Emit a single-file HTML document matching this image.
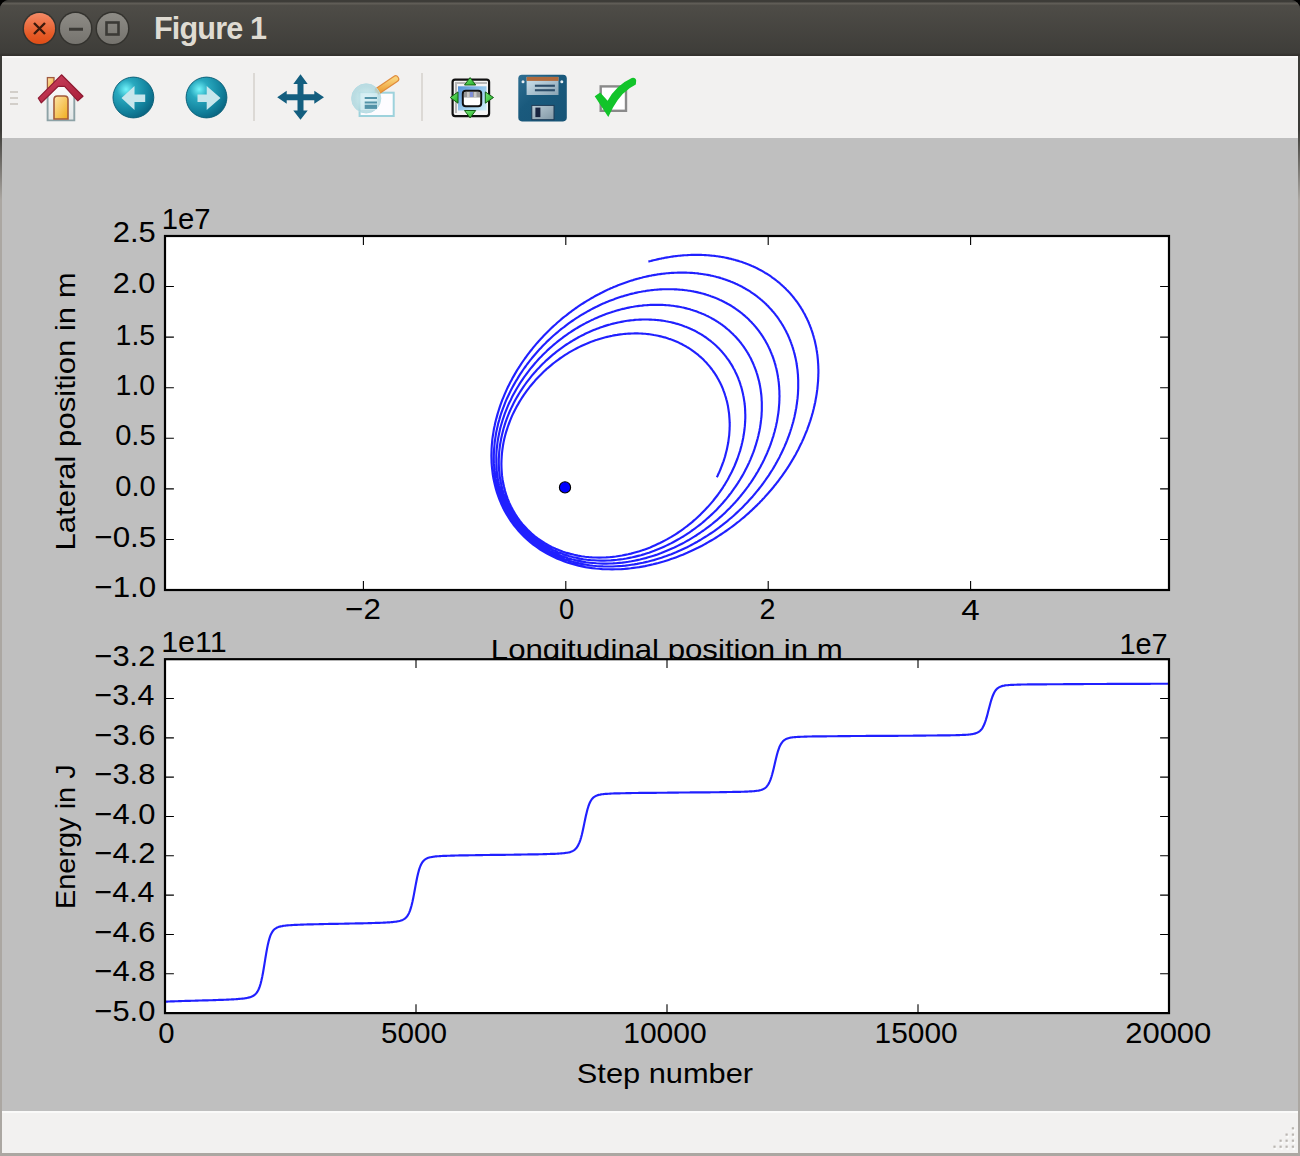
<!DOCTYPE html>
<html><head><meta charset="utf-8"><title>Figure 1</title>
<style>
html,body{margin:0;padding:0;width:1300px;height:1156px;overflow:hidden;background:#000;}
body{position:relative;font-family:"Liberation Sans",sans-serif;}
.win{position:absolute;left:0;top:0;width:1300px;height:1156px;border-radius:9px 9px 0 0;overflow:hidden;
 background:linear-gradient(to bottom,#3c3b37 0px,#3c3b37 130px,#aba7a2 200px,#aba7a2 100%);}
.title{position:absolute;left:0;top:0;width:1300px;height:56px;background:linear-gradient(to bottom,#3d3c38 0px,#3d3c38 2px,#625f59 3px,#5d5a54 4px,#4e4c47 5.5px,#3e3d39 53px,#34322e 55px,#34322e 56px);}
.title .hl{display:none;}
.btn{position:absolute;top:13px;width:31px;height:31px;border-radius:50%;box-shadow:0 0 0 1.5px #33322e;}
.close{left:24px;background:linear-gradient(to bottom,#f58a66,#e55a26 70%,#e04d16);}
.min{left:60px;background:linear-gradient(to bottom,#8e8c86,#75736e);}
.max{left:97px;background:linear-gradient(to bottom,#8e8c86,#75736e);}
.ttl{position:absolute;left:154px;top:11px;font-weight:bold;font-size:30.6px;color:#dfdbd2;letter-spacing:-0.85px;white-space:nowrap;}
.toolbar{position:absolute;left:2px;top:56px;width:1296px;height:82px;background:#f2f1f0;box-shadow:inset 0 2px 0 #f9f8f7;}
.plot{position:absolute;left:2px;top:138px;}
.status{position:absolute;left:2px;top:1111px;width:1296px;height:42px;background:#f2f1f0;box-shadow:inset 0 2px 0 #fafaf9;}
.icons{position:absolute;left:0;top:0;}
</style></head><body>
<div class="win">
 <div class="title"><div class="hl"></div>
  <div class="btn close"><svg width="31" height="31"><path d="M10 10L21 21M21 10L10 21" stroke="#3b1a0c" stroke-width="2.4"/></svg></div>
  <div class="btn min"><svg width="31" height="31"><path d="M9 16.2H23" stroke="#3b3a36" stroke-width="3"/></svg></div>
  <div class="btn max"><svg width="31" height="31"><rect x="9.5" y="9.5" width="12" height="12" fill="none" stroke="#3b3a36" stroke-width="2.6"/></svg></div>
  <div class="ttl">Figure 1</div>
 </div>
 <div class="toolbar"></div>
 <svg class="plot" width="1296" height="974" viewBox="2 138 1296 974">
<rect x="2" y="138" width="1296" height="974" fill="#bfbfbf"/>
<g font-family="Liberation Sans, sans-serif" font-size="29" fill="#000">
<text x="490.80" y="658.80" textLength="351.94" lengthAdjust="spacingAndGlyphs" font-size="28.00">Longitudinal position in m</text>
</g>
<rect x="165.0" y="236.0" width="1004.0" height="354.0" fill="#fff"/>
<clipPath id="c1"><rect x="165.0" y="236.0" width="1004.0" height="354.0"/></clipPath>
<path d="M716.8 477.3L717.6 475.7L718.3 474.1L719.1 472.5L719.8 470.9L720.5 469.3L721.1 467.7L721.7 466.1L722.3 464.5L722.9 462.9L723.5 461.3L724.0 459.8L724.5 458.2L725.0 456.6L725.4 455.1L725.8 453.5L726.2 452.0L726.6 450.4L727.0 448.9L727.3 447.3L727.6 445.8L727.9 444.3L728.2 442.8L728.4 441.3L728.6 439.7L728.8 438.2L729.0 436.7L729.2 435.3L729.3 433.8L729.4 432.3L729.5 430.8L729.6 429.4L729.6 427.9L729.7 426.5L729.7 425.0L729.7 423.6L729.6 422.2L729.6 420.8L729.5 419.4L729.4 418.0L729.3 416.6L729.2 415.2L729.1 413.8L728.9 412.4L728.7 411.1L728.5 409.7L728.3 408.4L728.1 407.1L727.9 405.7L727.6 404.4L727.3 403.1L727.0 401.8L726.7 400.5L726.3 399.3L726.0 398.0L725.6 396.7L725.2 395.5L724.8 394.2L724.4 393.0L724.0 391.8L723.5 390.6L723.1 389.4L722.6 388.2L722.1 387.0L721.6 385.8L721.0 384.6L720.5 383.5L719.9 382.3L719.3 381.2L718.7 380.1L718.1 379.0L717.5 377.9L716.9 376.8L716.2 375.7L715.5 374.7L714.9 373.6L714.2 372.6L713.4 371.5L712.7 370.5L712.0 369.5L711.2 368.5L710.4 367.5L709.7 366.5L708.9 365.6L708.0 364.6L707.2 363.7L706.4 362.7L705.5 361.8L704.6 360.9L703.8 360.0L702.9 359.1L702.0 358.3L701.0 357.4L700.1 356.6L699.1 355.8L698.2 354.9L697.2 354.1L696.2 353.4L695.2 352.6L694.2 351.8L693.2 351.1L692.1 350.3L691.1 349.6L690.0 348.9L688.9 348.2L687.8 347.5L686.7 346.9L685.6 346.2L684.5 345.6L683.3 345.0L682.2 344.3L681.0 343.7L679.9 343.2L678.7 342.6L677.5 342.1L676.2 341.5L675.0 341.0L673.8 340.5L672.5 340.0L671.3 339.6L670.0 339.1L668.7 338.7L667.4 338.2L666.1 337.8L664.8 337.4L663.5 337.1L662.1 336.7L660.8 336.4L659.4 336.1L658.1 335.8L656.7 335.5L655.3 335.2L653.9 335.0L652.5 334.7L651.0 334.5L649.6 334.3L648.1 334.1L646.7 334.0L645.2 333.8L643.7 333.7L642.3 333.6L640.8 333.5L639.3 333.5L637.7 333.4L636.2 333.4L634.7 333.4L633.1 333.5L631.6 333.5L630.0 333.6L628.4 333.6L626.9 333.8L625.3 333.9L623.7 334.0L622.1 334.2L620.4 334.4L618.8 334.6L617.2 334.9L615.5 335.1L613.9 335.4L612.2 335.8L610.6 336.1L608.9 336.5L607.2 336.9L605.5 337.3L603.8 337.7L602.1 338.2L600.4 338.7L598.7 339.2L597.0 339.8L595.3 340.3L593.5 340.9L591.8 341.6L590.0 342.2L588.3 342.9L586.5 343.7L584.8 344.4L583.0 345.2L581.3 346.0L579.5 346.9L577.7 347.8L575.9 348.7L574.2 349.6L572.4 350.6L570.6 351.6L568.8 352.7L567.0 353.8L565.2 354.9L563.4 356.1L561.6 357.3L559.9 358.5L558.1 359.8L556.3 361.1L554.5 362.5L552.7 363.9L551.0 365.3L549.2 366.8L547.4 368.3L545.7 369.9L543.9 371.5L542.2 373.2L540.5 374.9L538.7 376.7L537.0 378.5L535.3 380.3L533.7 382.3L532.0 384.2L530.3 386.2L528.7 388.3L527.1 390.4L525.5 392.6L523.9 394.8L522.4 397.1L520.9 399.5L519.4 401.9L518.0 404.4L516.5 406.9L515.2 409.5L513.8 412.2L512.5 414.9L511.3 417.7L510.1 420.6L509.0 423.5L507.9 426.5L506.9 429.6L505.9 432.7L505.0 436.0L504.2 439.2L503.5 442.6L502.9 446.0L502.4 449.5L502.0 453.0L501.7 456.6L501.5 460.3L501.4 464.0L501.5 467.7L501.7 471.5L502.0 475.4L502.5 479.2L503.2 483.1L504.1 487.1L505.1 491.0L506.3 494.9L507.7 498.8L509.2 502.6L511.0 506.4L512.9 510.1L515.1 513.8L517.4 517.3L519.9 520.8L522.5 524.1L525.4 527.3L528.3 530.4L531.4 533.3L534.6 536.0L538.0 538.6L541.4 540.9L544.9 543.2L548.4 545.2L552.1 547.1L555.7 548.8L559.4 550.3L563.1 551.7L566.8 552.9L570.5 553.9L574.2 554.8L577.9 555.6L581.5 556.2L585.1 556.7L588.7 557.1L592.2 557.4L595.7 557.5L599.2 557.6L602.6 557.5L606.0 557.4L609.3 557.2L612.5 556.9L615.8 556.5L618.9 556.0L622.0 555.5L625.1 554.9L628.1 554.3L631.0 553.6L633.9 552.8L636.7 552.0L639.5 551.2L642.3 550.3L644.9 549.4L647.6 548.4L650.2 547.4L652.7 546.3L655.2 545.2L657.6 544.1L660.0 543.0L662.4 541.8L664.6 540.6L666.9 539.4L669.1 538.1L671.3 536.9L673.4 535.6L675.5 534.3L677.5 533.0L679.5 531.6L681.4 530.3L683.4 528.9L685.2 527.5L687.1 526.1L688.9 524.7L690.6 523.3L692.4 521.9L694.0 520.4L695.7 519.0L697.3 517.5L698.9 516.0L700.4 514.6L701.9 513.1L703.4 511.6L704.9 510.1L706.3 508.6L707.7 507.1L709.0 505.6L710.3 504.1L711.6 502.6L712.9 501.1L714.1 499.5L715.3 498.0L716.5 496.5L717.7 495.0L718.8 493.4L719.9 491.9L720.9 490.4L722.0 488.8L723.0 487.3L723.9 485.8L724.9 484.3L725.8 482.7L726.7 481.2L727.6 479.7L728.5 478.1L729.3 476.6L730.1 475.1L730.9 473.6L731.7 472.0L732.4 470.5L733.1 469.0L733.8 467.5L734.5 466.0L735.1 464.5L735.7 463.0L736.3 461.5L736.9 460.0L737.5 458.5L738.0 457.0L738.5 455.5L739.0 454.0L739.5 452.5L740.0 451.1L740.4 449.6L740.8 448.1L741.2 446.6L741.6 445.2L741.9 443.7L742.3 442.3L742.6 440.8L742.9 439.4L743.2 438.0L743.4 436.5L743.7 435.1L743.9 433.7L744.1 432.3L744.3 430.9L744.5 429.5L744.6 428.1L744.8 426.7L744.9 425.3L745.0 423.9L745.1 422.5L745.2 421.2L745.2 419.8L745.3 418.4L745.3 417.1L745.3 415.7L745.3 414.4L745.2 413.1L745.2 411.8L745.1 410.4L745.1 409.1L745.0 407.8L744.9 406.5L744.8 405.2L744.6 404.0L744.5 402.7L744.3 401.4L744.1 400.1L743.9 398.9L743.7 397.6L743.5 396.4L743.2 395.2L743.0 393.9L742.7 392.7L742.4 391.5L742.1 390.3L741.8 389.1L741.5 387.9L741.2 386.7L740.8 385.6L740.4 384.4L740.1 383.3L739.7 382.1L739.3 381.0L738.8 379.8L738.4 378.7L738.0 377.6L737.5 376.5L737.0 375.4L736.5 374.3L736.0 373.2L735.5 372.2L735.0 371.1L734.5 370.0L733.9 369.0L733.3 367.9L732.8 366.9L732.2 365.9L731.6 364.9L731.0 363.9L730.3 362.9L729.7 361.9L729.1 360.9L728.4 360.0L727.7 359.0L727.0 358.1L726.3 357.1L725.6 356.2L724.9 355.3L724.2 354.4L723.4 353.5L722.7 352.6L721.9 351.7L721.1 350.8L720.3 350.0L719.5 349.1L718.7 348.3L717.9 347.5L717.1 346.7L716.2 345.8L715.3 345.0L714.5 344.3L713.6 343.5L712.7 342.7L711.8 342.0L710.9 341.2L710.0 340.5L709.0 339.8L708.1 339.1L707.1 338.4L706.2 337.7L705.2 337.0L704.2 336.3L703.2 335.7L702.2 335.0L701.2 334.4L700.1 333.8L699.1 333.2L698.0 332.6L697.0 332.0L695.9 331.4L694.8 330.8L693.7 330.3L692.6 329.8L691.5 329.2L690.4 328.7L689.3 328.2L688.1 327.7L687.0 327.3L685.8 326.8L684.7 326.4L683.5 325.9L682.3 325.5L681.1 325.1L679.9 324.7L678.7 324.3L677.4 323.9L676.2 323.6L674.9 323.2L673.7 322.9L672.4 322.6L671.2 322.3L669.9 322.0L668.6 321.8L667.3 321.5L666.0 321.3L664.6 321.0L663.3 320.8L662.0 320.6L660.6 320.4L659.3 320.3L657.9 320.1L656.5 320.0L655.2 319.9L653.8 319.8L652.4 319.7L651.0 319.6L649.5 319.6L648.1 319.5L646.7 319.5L645.2 319.5L643.8 319.5L642.3 319.5L640.9 319.6L639.4 319.6L637.9 319.7L636.4 319.8L634.9 319.9L633.4 320.1L631.9 320.2L630.4 320.4L628.9 320.6L627.3 320.8L625.8 321.0L624.3 321.3L622.7 321.6L621.1 321.9L619.6 322.2L618.0 322.5L616.4 322.9L614.8 323.2L613.2 323.6L611.6 324.0L610.0 324.5L608.4 324.9L606.8 325.4L605.2 325.9L603.5 326.4L601.9 327.0L600.2 327.6L598.6 328.2L596.9 328.8L595.3 329.4L593.6 330.1L592.0 330.8L590.3 331.5L588.6 332.3L586.9 333.0L585.2 333.8L583.6 334.7L581.9 335.5L580.2 336.4L578.5 337.3L576.8 338.3L575.1 339.2L573.4 340.2L571.7 341.3L570.0 342.3L568.3 343.4L566.5 344.5L564.8 345.7L563.1 346.9L561.4 348.1L559.7 349.3L558.0 350.6L556.3 351.9L554.6 353.3L552.9 354.7L551.2 356.1L549.5 357.6L547.8 359.1L546.1 360.6L544.5 362.2L542.8 363.8L541.1 365.5L539.5 367.2L537.8 368.9L536.2 370.7L534.6 372.6L532.9 374.4L531.3 376.4L529.8 378.3L528.2 380.3L526.6 382.4L525.1 384.5L523.6 386.7L522.1 388.9L520.6 391.2L519.1 393.5L517.7 395.9L516.3 398.3L514.9 400.8L513.6 403.3L512.3 405.9L511.0 408.6L509.8 411.3L508.6 414.1L507.5 416.9L506.4 419.8L505.4 422.7L504.4 425.8L503.5 428.8L502.7 432.0L501.9 435.2L501.2 438.5L500.6 441.8L500.0 445.2L499.6 448.6L499.2 452.2L499.0 455.7L498.8 459.3L498.8 463.0L498.9 466.7L499.1 470.5L499.5 474.3L500.0 478.1L500.7 481.9L501.5 485.8L502.4 489.6L503.6 493.5L504.9 497.3L506.4 501.2L508.0 504.9L509.9 508.7L511.9 512.3L514.0 515.9L516.4 519.4L518.9 522.8L521.6 526.0L524.4 529.2L527.3 532.2L530.4 535.0L533.6 537.7L536.9 540.3L540.2 542.7L543.7 544.9L547.2 546.9L550.7 548.8L554.3 550.6L558.0 552.2L561.6 553.6L565.3 554.9L568.9 556.0L572.5 557.0L576.2 557.8L579.8 558.6L583.4 559.2L586.9 559.7L590.5 560.1L593.9 560.3L597.4 560.5L600.8 560.6L604.2 560.6L607.5 560.5L610.8 560.4L614.0 560.1L617.2 559.8L620.3 559.4L623.4 559.0L626.4 558.5L629.4 557.9L632.4 557.3L635.3 556.6L638.1 555.9L640.9 555.2L643.6 554.4L646.3 553.5L649.0 552.7L651.6 551.7L654.2 550.8L656.7 549.8L659.2 548.8L661.6 547.8L664.0 546.7L666.3 545.6L668.6 544.5L670.9 543.4L673.1 542.2L675.3 541.0L677.5 539.8L679.6 538.6L681.6 537.4L683.7 536.2L685.7 534.9L687.6 533.6L689.6 532.3L691.4 531.0L693.3 529.7L695.1 528.4L696.9 527.0L698.7 525.7L700.4 524.3L702.1 523.0L703.7 521.6L705.3 520.2L706.9 518.8L708.5 517.4L710.0 516.0L711.5 514.6L713.0 513.2L714.5 511.8L715.9 510.4L717.3 508.9L718.6 507.5L720.0 506.1L721.3 504.6L722.6 503.2L723.8 501.8L725.1 500.3L726.3 498.9L727.5 497.4L728.6 496.0L729.7 494.5L730.9 493.1L731.9 491.6L733.0 490.1L734.0 488.7L735.1 487.2L736.0 485.8L737.0 484.3L738.0 482.9L738.9 481.4L739.8 480.0L740.7 478.5L741.5 477.1L742.4 475.6L743.2 474.2L744.0 472.7L744.8 471.3L745.5 469.8L746.3 468.4L747.0 466.9L747.7 465.5L748.4 464.1L749.1 462.6L749.7 461.2L750.3 459.8L750.9 458.3L751.5 456.9L752.1 455.5L752.6 454.1L753.2 452.7L753.7 451.3L754.2 449.9L754.7 448.4L755.1 447.0L755.6 445.7L756.0 444.3L756.4 442.9L756.8 441.5L757.2 440.1L757.6 438.7L757.9 437.4L758.3 436.0L758.6 434.6L758.9 433.3L759.2 431.9L759.5 430.5L759.7 429.2L760.0 427.9L760.2 426.5L760.4 425.2L760.6 423.9L760.8 422.5L760.9 421.2L761.1 419.9L761.2 418.6L761.4 417.3L761.5 416.0L761.6 414.7L761.6 413.4L761.7 412.1L761.8 410.8L761.8 409.6L761.8 408.3L761.8 407.0L761.8 405.8L761.8 404.5L761.8 403.3L761.8 402.0L761.7 400.8L761.6 399.6L761.6 398.3L761.5 397.1L761.4 395.9L761.3 394.7L761.1 393.5L761.0 392.3L760.8 391.1L760.7 389.9L760.5 388.8L760.3 387.6L760.1 386.4L759.9 385.3L759.6 384.1L759.4 383.0L759.2 381.8L758.9 380.7L758.6 379.6L758.3 378.5L758.0 377.4L757.7 376.2L757.4 375.1L757.1 374.1L756.7 373.0L756.4 371.9L756.0 370.8L755.6 369.7L755.2 368.7L754.8 367.6L754.4 366.6L754.0 365.6L753.6 364.5L753.1 363.5L752.7 362.5L752.2 361.5L751.7 360.5L751.3 359.5L750.8 358.5L750.3 357.5L749.7 356.5L749.2 355.6L748.7 354.6L748.1 353.6L747.6 352.7L747.0 351.8L746.4 350.8L745.8 349.9L745.2 349.0L744.6 348.1L744.0 347.2L743.4 346.3L742.7 345.4L742.1 344.6L741.4 343.7L740.8 342.8L740.1 342.0L739.4 341.1L738.7 340.3L738.0 339.5L737.3 338.7L736.5 337.8L735.8 337.0L735.1 336.2L734.3 335.5L733.5 334.7L732.8 333.9L732.0 333.2L731.2 332.4L730.4 331.7L729.6 330.9L728.8 330.2L727.9 329.5L727.1 328.8L726.2 328.1L725.4 327.4L724.5 326.7L723.7 326.0L722.8 325.4L721.9 324.7L721.0 324.1L720.1 323.4L719.1 322.8L718.2 322.2L717.3 321.6L716.3 321.0L715.4 320.4L714.4 319.8L713.4 319.3L712.5 318.7L711.5 318.2L710.5 317.6L709.5 317.1L708.5 316.6L707.4 316.1L706.4 315.6L705.4 315.1L704.3 314.6L703.3 314.1L702.2 313.7L701.1 313.2L700.0 312.8L699.0 312.4L697.9 311.9L696.8 311.5L695.6 311.1L694.5 310.8L693.4 310.4L692.3 310.0L691.1 309.7L690.0 309.3L688.8 309.0L687.6 308.7L686.4 308.4L685.3 308.1L684.1 307.8L682.9 307.5L681.7 307.3L680.4 307.0L679.2 306.8L678.0 306.6L676.7 306.4L675.5 306.2L674.2 306.0L673.0 305.8L671.7 305.7L670.4 305.5L669.2 305.4L667.9 305.3L666.6 305.2L665.3 305.1L663.9 305.0L662.6 304.9L661.3 304.9L660.0 304.8L658.6 304.8L657.3 304.8L655.9 304.8L654.5 304.8L653.2 304.8L651.8 304.9L650.4 304.9L649.0 305.0L647.6 305.1L646.2 305.2L644.8 305.3L643.4 305.4L642.0 305.6L640.5 305.7L639.1 305.9L637.7 306.1L636.2 306.3L634.7 306.5L633.3 306.8L631.8 307.0L630.3 307.3L628.9 307.6L627.4 307.9L625.9 308.2L624.4 308.6L622.9 308.9L621.4 309.3L619.8 309.7L618.3 310.1L616.8 310.5L615.3 311.0L613.7 311.5L612.2 311.9L610.6 312.5L609.1 313.0L607.5 313.5L605.9 314.1L604.4 314.7L602.8 315.3L601.2 315.9L599.6 316.6L598.1 317.2L596.5 317.9L594.9 318.6L593.3 319.4L591.7 320.1L590.1 320.9L588.5 321.7L586.8 322.5L585.2 323.4L583.6 324.2L582.0 325.1L580.4 326.0L578.7 327.0L577.1 328.0L575.5 328.9L573.8 330.0L572.2 331.0L570.6 332.1L568.9 333.2L567.3 334.3L565.7 335.5L564.0 336.6L562.4 337.9L560.8 339.1L559.1 340.4L557.5 341.7L555.9 343.0L554.2 344.4L552.6 345.8L551.0 347.2L549.3 348.6L547.7 350.1L546.1 351.7L544.5 353.2L542.9 354.8L541.3 356.5L539.7 358.1L538.1 359.8L536.5 361.6L535.0 363.3L533.4 365.2L531.9 367.0L530.3 368.9L528.8 370.9L527.3 372.8L525.8 374.9L524.3 376.9L522.8 379.1L521.4 381.2L519.9 383.4L518.5 385.7L517.1 388.0L515.8 390.3L514.4 392.7L513.1 395.1L511.8 397.6L510.6 400.2L509.3 402.8L508.1 405.4L507.0 408.1L505.9 410.9L504.8 413.7L503.8 416.6L502.8 419.5L501.9 422.5L501.0 425.5L500.2 428.6L499.5 431.8L498.8 435.0L498.2 438.3L497.6 441.6L497.2 445.0L496.8 448.4L496.5 451.9L496.3 455.5L496.3 459.1L496.3 462.7L496.5 466.4L496.7 470.1L497.1 473.8L497.6 477.6L498.3 481.4L499.1 485.2L500.1 489.0L501.2 492.8L502.5 496.6L503.9 500.4L505.5 504.2L507.3 507.9L509.2 511.5L511.3 515.1L513.5 518.6L515.9 522.0L518.5 525.3L521.2 528.5L524.0 531.5L527.0 534.5L530.0 537.3L533.2 539.9L536.5 542.4L539.8 544.8L543.2 547.0L546.7 549.0L550.2 550.9L553.8 552.6L557.3 554.2L560.9 555.7L564.5 557.0L568.1 558.2L571.7 559.2L575.3 560.1L578.9 560.9L582.4 561.6L586.0 562.2L589.5 562.7L592.9 563.0L596.4 563.3L599.8 563.5L603.1 563.6L606.4 563.6L609.7 563.5L612.9 563.4L616.1 563.2L619.3 562.9L622.4 562.6L625.4 562.2L628.4 561.8L631.4 561.3L634.3 560.7L637.2 560.1L640.0 559.5L642.8 558.8L645.6 558.1L648.3 557.3L651.0 556.5L653.6 555.7L656.2 554.9L658.7 554.0L661.2 553.1L663.7 552.1L666.1 551.1L668.5 550.1L670.8 549.1L673.1 548.1L675.4 547.0L677.6 545.9L679.8 544.8L682.0 543.7L684.1 542.6L686.2 541.4L688.2 540.3L690.2 539.1L692.2 537.9L694.2 536.7L696.1 535.5L698.0 534.2L699.9 533.0L701.7 531.7L703.5 530.5L705.3 529.2L707.0 527.9L708.7 526.6L710.4 525.3L712.1 524.0L713.7 522.7L715.3 521.4L716.9 520.1L718.4 518.7L719.9 517.4L721.4 516.1L722.9 514.7L724.4 513.4L725.8 512.0L727.2 510.6L728.5 509.3L729.9 507.9L731.2 506.5L732.5 505.2L733.8 503.8L735.1 502.4L736.3 501.1L737.5 499.7L738.7 498.3L739.9 496.9L741.0 495.5L742.1 494.1L743.2 492.8L744.3 491.4L745.4 490.0L746.4 488.6L747.5 487.2L748.5 485.8L749.4 484.4L750.4 483.1L751.4 481.7L752.3 480.3L753.2 478.9L754.1 477.5L755.0 476.1L755.8 474.8L756.6 473.4L757.5 472.0L758.3 470.6L759.0 469.2L759.8 467.9L760.6 466.5L761.3 465.1L762.0 463.8L762.7 462.4L763.4 461.0L764.1 459.7L764.7 458.3L765.3 456.9L766.0 455.6L766.6 454.2L767.2 452.9L767.7 451.5L768.3 450.2L768.8 448.8L769.4 447.5L769.9 446.2L770.4 444.8L770.9 443.5L771.3 442.2L771.8 440.9L772.2 439.5L772.6 438.2L773.1 436.9L773.5 435.6L773.8 434.3L774.2 433.0L774.6 431.7L774.9 430.4L775.2 429.1L775.6 427.8L775.9 426.5L776.2 425.2L776.4 423.9L776.7 422.7L777.0 421.4L777.2 420.1L777.4 418.9L777.6 417.6L777.8 416.3L778.0 415.1L778.2 413.8L778.4 412.6L778.5 411.4L778.7 410.1L778.8 408.9L778.9 407.7L779.0 406.4L779.1 405.2L779.2 404.0L779.3 402.8L779.3 401.6L779.4 400.4L779.4 399.2L779.4 398.0L779.5 396.8L779.5 395.7L779.4 394.5L779.4 393.3L779.4 392.1L779.4 391.0L779.3 389.8L779.2 388.7L779.2 387.5L779.1 386.4L779.0 385.2L778.9 384.1L778.8 383.0L778.7 381.9L778.5 380.7L778.4 379.6L778.2 378.5L778.0 377.4L777.9 376.3L777.7 375.2L777.5 374.2L777.3 373.1L777.1 372.0L776.8 370.9L776.6 369.9L776.4 368.8L776.1 367.8L775.8 366.7L775.6 365.7L775.3 364.6L775.0 363.6L774.7 362.6L774.4 361.5L774.0 360.5L773.7 359.5L773.4 358.5L773.0 357.5L772.7 356.5L772.3 355.5L771.9 354.6L771.5 353.6L771.1 352.6L770.7 351.7L770.3 350.7L769.9 349.8L769.5 348.8L769.0 347.9L768.6 346.9L768.1 346.0L767.7 345.1L767.2 344.2L766.7 343.3L766.2 342.4L765.7 341.5L765.2 340.6L764.7 339.7L764.1 338.8L763.6 337.9L763.1 337.1L762.5 336.2L761.9 335.4L761.4 334.5L760.8 333.7L760.2 332.9L759.6 332.0L759.0 331.2L758.4 330.4L757.8 329.6L757.2 328.8L756.5 328.0L755.9 327.2L755.2 326.4L754.6 325.7L753.9 324.9L753.2 324.1L752.5 323.4L751.9 322.7L751.2 321.9L750.4 321.2L749.7 320.5L749.0 319.7L748.3 319.0L747.5 318.3L746.8 317.6L746.0 317.0L745.3 316.3L744.5 315.6L743.7 314.9L742.9 314.3L742.2 313.6L741.4 313.0L740.5 312.3L739.7 311.7L738.9 311.1L738.1 310.5L737.2 309.9L736.4 309.3L735.5 308.7L734.7 308.1L733.8 307.5L732.9 307.0L732.1 306.4L731.2 305.8L730.3 305.3L729.4 304.8L728.5 304.2L727.5 303.7L726.6 303.2L725.7 302.7L724.7 302.2L723.8 301.7L722.8 301.2L721.9 300.8L720.9 300.3L719.9 299.9L719.0 299.4L718.0 299.0L717.0 298.6L716.0 298.1L715.0 297.7L713.9 297.3L712.9 296.9L711.9 296.6L710.8 296.2L709.8 295.8L708.8 295.5L707.7 295.1L706.6 294.8L705.6 294.4L704.5 294.1L703.4 293.8L702.3 293.5L701.2 293.2L700.1 292.9L699.0 292.7L697.9 292.4L696.7 292.1L695.6 291.9L694.5 291.7L693.3 291.4L692.2 291.2L691.0 291.0L689.8 290.8L688.7 290.7L687.5 290.5L686.3 290.3L685.1 290.2L683.9 290.0L682.7 289.9L681.5 289.8L680.3 289.7L679.1 289.6L677.8 289.5L676.6 289.4L675.4 289.3L674.1 289.3L672.9 289.2L671.6 289.2L670.3 289.2L669.1 289.2L667.8 289.2L666.5 289.2L665.2 289.2L663.9 289.2L662.6 289.3L661.3 289.4L660.0 289.4L658.7 289.5L657.4 289.6L656.0 289.7L654.7 289.8L653.4 290.0L652.0 290.1L650.6 290.3L649.3 290.5L647.9 290.6L646.6 290.8L645.2 291.1L643.8 291.3L642.4 291.5L641.0 291.8L639.6 292.0L638.2 292.3L636.8 292.6L635.4 292.9L634.0 293.3L632.5 293.6L631.1 293.9L629.7 294.3L628.2 294.7L626.8 295.1L625.4 295.5L623.9 295.9L622.4 296.4L621.0 296.8L619.5 297.3L618.0 297.8L616.6 298.3L615.1 298.8L613.6 299.4L612.1 299.9L610.6 300.5L609.1 301.1L607.6 301.7L606.1 302.3L604.6 303.0L603.1 303.6L601.5 304.3L600.0 305.0L598.5 305.7L597.0 306.5L595.4 307.2L593.9 308.0L592.4 308.8L590.8 309.6L589.3 310.5L587.7 311.3L586.2 312.2L584.6 313.1L583.1 314.0L581.5 314.9L579.9 315.9L578.4 316.9L576.8 317.9L575.2 318.9L573.7 320.0L572.1 321.0L570.5 322.1L569.0 323.2L567.4 324.4L565.8 325.6L564.3 326.8L562.7 328.0L561.1 329.2L559.5 330.5L558.0 331.8L556.4 333.1L554.8 334.5L553.3 335.8L551.7 337.2L550.1 338.7L548.6 340.1L547.0 341.6L545.5 343.2L543.9 344.7L542.4 346.3L540.9 347.9L539.3 349.6L537.8 351.3L536.3 353.0L534.8 354.7L533.3 356.5L531.8 358.3L530.3 360.2L528.8 362.1L527.3 364.0L525.9 366.0L524.4 368.0L523.0 370.0L521.6 372.1L520.2 374.2L518.8 376.4L517.5 378.6L516.1 380.8L514.8 383.1L513.5 385.4L512.2 387.8L510.9 390.3L509.7 392.7L508.5 395.2L507.3 397.8L506.1 400.4L505.0 403.1L504.0 405.8L502.9 408.6L501.9 411.4L500.9 414.2L500.0 417.1L499.2 420.1L498.3 423.1L497.6 426.2L496.9 429.3L496.2 432.5L495.7 435.7L495.2 439.0L494.7 442.4L494.4 445.8L494.1 449.2L493.9 452.7L493.8 456.2L493.8 459.8L493.9 463.4L494.2 467.1L494.5 470.7L495.0 474.5L495.5 478.2L496.3 482.0L497.1 485.7L498.1 489.5L499.2 493.3L500.5 497.0L502.0 500.8L503.6 504.5L505.3 508.1L507.2 511.8L509.3 515.3L511.5 518.8L513.8 522.2L516.3 525.5L519.0 528.7L521.7 531.7L524.6 534.7L527.6 537.5L530.7 540.2L533.9 542.8L537.1 545.2L540.5 547.5L543.8 549.6L547.3 551.6L550.8 553.4L554.3 555.1L557.8 556.7L561.4 558.1L564.9 559.4L568.5 560.6L572.1 561.7L575.6 562.6L579.1 563.4L582.7 564.1L586.1 564.7L589.6 565.3L593.0 565.7L596.4 566.0L599.8 566.2L603.1 566.4L606.4 566.5L609.7 566.5L612.9 566.5L616.1 566.3L619.2 566.1L622.3 565.9L625.4 565.6L628.4 565.2L631.4 564.8L634.3 564.4L637.2 563.9L640.1 563.3L642.9 562.8L645.7 562.1L648.4 561.5L651.1 560.8L653.7 560.1L656.4 559.3L658.9 558.5L661.5 557.7L664.0 556.8L666.4 556.0L668.9 555.1L671.3 554.2L673.6 553.2L676.0 552.3L678.2 551.3L680.5 550.3L682.7 549.2L684.9 548.2L687.1 547.2L689.2 546.1L691.3 545.0L693.4 543.9L695.4 542.8L697.4 541.7L699.4 540.5L701.3 539.4L703.2 538.2L705.1 537.0L707.0 535.9L708.8 534.7L710.6 533.5L712.4 532.3L714.2 531.1L715.9 529.8L717.6 528.6L719.3 527.4L720.9 526.1L722.5 524.9L724.1 523.6L725.7 522.4L727.3 521.1L728.8 519.8L730.3 518.5L731.8 517.3L733.3 516.0L734.7 514.7L736.1 513.4L737.5 512.1L738.9 510.8L740.2 509.5L741.6 508.2L742.9 506.9L744.2 505.6L745.4 504.3L746.7 503.0L747.9 501.7L749.1 500.3L750.3 499.0L751.5 497.7L752.7 496.4L753.8 495.1L754.9 493.8L756.0 492.4L757.1 491.1L758.2 489.8L759.2 488.5L760.3 487.1L761.3 485.8L762.3 484.5L763.3 483.2L764.2 481.9L765.2 480.5L766.1 479.2L767.0 477.9L767.9 476.6L768.8 475.3L769.7 473.9L770.5 472.6L771.3 471.3L772.2 470.0L773.0 468.7L773.8 467.4L774.5 466.1L775.3 464.8L776.0 463.4L776.8 462.1L777.5 460.8L778.2 459.5L778.9 458.2L779.6 456.9L780.2 455.6L780.9 454.3L781.5 453.1L782.1 451.8L782.7 450.5L783.3 449.2L783.9 447.9L784.5 446.6L785.0 445.3L785.6 444.1L786.1 442.8L786.6 441.5L787.1 440.3L787.6 439.0L788.1 437.7L788.6 436.5L789.0 435.2L789.5 434.0L789.9 432.7L790.3 431.5L790.7 430.2L791.1 429.0L791.5 427.7L791.9 426.5L792.2 425.2L792.6 424.0L792.9 422.8L793.3 421.6L793.6 420.3L793.9 419.1L794.2 417.9L794.5 416.7L794.7 415.5L795.0 414.3L795.3 413.1L795.5 411.9L795.7 410.7L795.9 409.5L796.2 408.3L796.4 407.1L796.5 405.9L796.7 404.8L796.9 403.6L797.0 402.4L797.2 401.3L797.3 400.1L797.5 398.9L797.6 397.8L797.7 396.6L797.8 395.5L797.9 394.3L798.0 393.2L798.0 392.1L798.1 390.9L798.1 389.8L798.2 388.7L798.2 387.6L798.2 386.4L798.2 385.3L798.2 384.2L798.2 383.1L798.2 382.0L798.2 380.9L798.2 379.8L798.1 378.7L798.1 377.7L798.0 376.6L798.0 375.5L797.9 374.4L797.8 373.4L797.7 372.3L797.6 371.2L797.5 370.2L797.4 369.1L797.2 368.1L797.1 367.1L796.9 366.0L796.8 365.0L796.6 364.0L796.5 362.9L796.3 361.9L796.1 360.9L795.9 359.9L795.7 358.9L795.5 357.9L795.2 356.9L795.0 355.9L794.8 354.9L794.5 353.9L794.3 353.0L794.0 352.0L793.8 351.0L793.5 350.1L793.2 349.1L792.9 348.2L792.6 347.2L792.3 346.3L792.0 345.3L791.6 344.4L791.3 343.5L791.0 342.5L790.6 341.6L790.3 340.7L789.9 339.8L789.5 338.9L789.2 338.0L788.8 337.1L788.4 336.2L788.0 335.3L787.6 334.4L787.2 333.6L786.7 332.7L786.3 331.8L785.9 331.0L785.4 330.1L785.0 329.3L784.5 328.4L784.1 327.6L783.6 326.8L783.1 325.9L782.6 325.1L782.1 324.3L781.6 323.5L781.1 322.7L780.6 321.9L780.1 321.1L779.5 320.3L779.0 319.5L778.5 318.7L777.9 317.9L777.4 317.2L776.8 316.4L776.2 315.6L775.6 314.9L775.1 314.1L774.5 313.4L773.9 312.7L773.3 311.9L772.6 311.2L772.0 310.5L771.4 309.8L770.8 309.1L770.1 308.4L769.5 307.7L768.8 307.0L768.2 306.3L767.5 305.6L766.8 305.0L766.2 304.3L765.5 303.6L764.8 303.0L764.1 302.3L763.4 301.7L762.7 301.1L762.0 300.4L761.2 299.8L760.5 299.2L759.8 298.6L759.0 298.0L758.3 297.4L757.5 296.8L756.8 296.2L756.0 295.6L755.2 295.0L754.4 294.5L753.6 293.9L752.8 293.4L752.0 292.8L751.2 292.3L750.4 291.7L749.6 291.2L748.8 290.7L748.0 290.2L747.1 289.7L746.3 289.2L745.4 288.7L744.6 288.2L743.7 287.7L742.8 287.2L742.0 286.7L741.1 286.3L740.2 285.8L739.3 285.4L738.4 284.9L737.5 284.5L736.6 284.1L735.7 283.7L734.8 283.2L733.8 282.8L732.9 282.4L732.0 282.0L731.0 281.7L730.1 281.3L729.1 280.9L728.1 280.6L727.2 280.2L726.2 279.9L725.2 279.5L724.2 279.2L723.2 278.9L722.3 278.5L721.2 278.2L720.2 277.9L719.2 277.6L718.2 277.3L717.2 277.1L716.1 276.8L715.1 276.5L714.1 276.3L713.0 276.0L712.0 275.8L710.9 275.6L709.8 275.3L708.8 275.1L707.7 274.9L706.6 274.7L705.5 274.5L704.4 274.4L703.3 274.2L702.2 274.0L701.1 273.9L700.0 273.7L698.9 273.6L697.7 273.4L696.6 273.3L695.5 273.2L694.3 273.1L693.2 273.0L692.0 272.9L690.9 272.8L689.7 272.8L688.5 272.7L687.4 272.7L686.2 272.6L685.0 272.6L683.8 272.6L682.6 272.6L681.4 272.6L680.2 272.6L679.0 272.6L677.8 272.6L676.6 272.7L675.3 272.7L674.1 272.8L672.9 272.8L671.6 272.9L670.4 273.0L669.1 273.1L667.9 273.2L666.6 273.3L665.3 273.5L664.1 273.6L662.8 273.7L661.5 273.9L660.2 274.1L658.9 274.3L657.6 274.4L656.3 274.7L655.0 274.9L653.7 275.1L652.4 275.3L651.1 275.6L649.7 275.8L648.4 276.1L647.1 276.4L645.7 276.7L644.4 277.0L643.0 277.3L641.7 277.7L640.3 278.0L639.0 278.4L637.6 278.7L636.2 279.1L634.8 279.5L633.5 279.9L632.1 280.4L630.7 280.8L629.3 281.2L627.9 281.7L626.5 282.2L625.1 282.7L623.7 283.2L622.3 283.7L620.9 284.2L619.4 284.8L618.0 285.3L616.6 285.9L615.2 286.5L613.7 287.1L612.3 287.7L610.8 288.3L609.4 289.0L607.9 289.6L606.5 290.3L605.0 291.0L603.6 291.7L602.1 292.5L600.6 293.2L599.2 294.0L597.7 294.7L596.2 295.5L594.7 296.3L593.3 297.2L591.8 298.0L590.3 298.9L588.8 299.8L587.3 300.7L585.8 301.6L584.3 302.5L582.8 303.5L581.3 304.4L579.8 305.4L578.3 306.4L576.8 307.5L575.3 308.5L573.8 309.6L572.3 310.7L570.8 311.8L569.3 312.9L567.8 314.1L566.3 315.3L564.7 316.5L563.2 317.7L561.7 318.9L560.2 320.2L558.7 321.5L557.2 322.8L555.7 324.2L554.2 325.5L552.7 326.9L551.2 328.3L549.7 329.8L548.2 331.2L546.7 332.7L545.2 334.2L543.7 335.8L542.2 337.4L540.7 339.0L539.3 340.6L537.8 342.2L536.3 343.9L534.9 345.6L533.4 347.4L532.0 349.2L530.5 351.0L529.1 352.8L527.7 354.7L526.3 356.6L524.9 358.5L523.5 360.5L522.1 362.5L520.7 364.6L519.4 366.7L518.0 368.8L516.7 370.9L515.4 373.1L514.1 375.4L512.8 377.6L511.6 379.9L510.3 382.3L509.1 384.7L507.9 387.1L506.7 389.6L505.6 392.1L504.5 394.7L503.4 397.3L502.3 399.9L501.3 402.6L500.3 405.4L499.4 408.2L498.5 411.0L497.6 413.9L496.8 416.9L496.0 419.8L495.2 422.9L494.6 426.0L493.9 429.1L493.4 432.3L492.9 435.5L492.4 438.8L492.1 442.1L491.8 445.5L491.6 448.9L491.5 452.4L491.4 455.9L491.5 459.4L491.6 463.0L491.9 466.6L492.3 470.3L492.7 474.0L493.3 477.7L494.1 481.4L494.9 485.1L495.9 488.9L497.0 492.6L498.3 496.3L499.7 500.0L501.2 503.7L502.9 507.4L504.7 511.0L506.7 514.5L508.9 518.0L511.1 521.4L513.5 524.7L516.1 527.9L518.7 531.0L521.5 534.0L524.4 536.9L527.4 539.7L530.5 542.4L533.6 544.9L536.9 547.2L540.2 549.5L543.6 551.6L547.0 553.6L550.4 555.4L553.9 557.1L557.4 558.7L560.9 560.1L564.4 561.5L568.0 562.7L571.5 563.8L575.0 564.7L578.5 565.6L582.0 566.4L585.4 567.1L588.9 567.6L592.3 568.1L595.7 568.5L599.0 568.8L602.3 569.1L605.6 569.2L608.9 569.3L612.1 569.4L615.3 569.3L618.4 569.2L621.5 569.1L624.6 568.9L627.6 568.6L630.6 568.3L633.5 567.9L636.5 567.5L639.3 567.1L642.2 566.6L645.0 566.1L647.7 565.5L650.5 564.9L653.2 564.3L655.8 563.6L658.4 563.0L661.0 562.2L663.6 561.5L666.1 560.7L668.6 559.9L671.0 559.1L673.4 558.3L675.8 557.4L678.2 556.5L680.5 555.6L682.8 554.7L685.0 553.7L687.2 552.8L689.4 551.8L691.6 550.8L693.7 549.8L695.8 548.8L697.9 547.8L700.0 546.7L702.0 545.7L704.0 544.6L706.0 543.5L707.9 542.4L709.8 541.3L711.7 540.2L713.6 539.1L715.4 538.0L717.2 536.8L719.0 535.7L720.8 534.5L722.5 533.4L724.3 532.2L726.0 531.0L727.6 529.9L729.3 528.7L730.9 527.5L732.5 526.3L734.1 525.1L735.7 523.9L737.2 522.7L738.8 521.5L740.3 520.2L741.7 519.0L743.2 517.8L744.7 516.6L746.1 515.3L747.5 514.1L748.9 512.9L750.2 511.6L751.6 510.4L752.9 509.1L754.2 507.9L755.5 506.6L756.8 505.4L758.1 504.1L759.3 502.9L760.5 501.6L761.7 500.4L762.9 499.1L764.1 497.9L765.2 496.6L766.4 495.3L767.5 494.1L768.6 492.8L769.7 491.5L770.8 490.3L771.9 489.0L772.9 487.8L773.9 486.5L774.9 485.2L776.0 484.0L776.9 482.7L777.9 481.5L778.9 480.2L779.8 478.9L780.7 477.7L781.7 476.4L782.6 475.1L783.4 473.9L784.3 472.6L785.2 471.4L786.0 470.1L786.9 468.9L787.7 467.6L788.5 466.4L789.3 465.1L790.1 463.9L790.8 462.6L791.6 461.4L792.3 460.1L793.1 458.9L793.8 457.6L794.5 456.4L795.2 455.2L795.9 453.9L796.5 452.7L797.2 451.4L797.9 450.2L798.5 449.0L799.1 447.7L799.7 446.5L800.3 445.3L800.9 444.1L801.5 442.9L802.1 441.6L802.6 440.4L803.2 439.2L803.7 438.0L804.2 436.8L804.7 435.6L805.2 434.4L805.7 433.2L806.2 432.0L806.7 430.8L807.2 429.6L807.6 428.4L808.0 427.2L808.5 426.0L808.9 424.8L809.3 423.6L809.7 422.4L810.1 421.3L810.5 420.1L810.9 418.9L811.2 417.7L811.6 416.6L811.9 415.4L812.2 414.3L812.6 413.1L812.9 411.9L813.2 410.8L813.5 409.6L813.8 408.5L814.0 407.3L814.3 406.2L814.6 405.1L814.8 403.9L815.1 402.8L815.3 401.7L815.5 400.5L815.7 399.4L815.9 398.3L816.1 397.2L816.3 396.1L816.5 394.9L816.7 393.8L816.8 392.7L817.0 391.6L817.1 390.5L817.3 389.4L817.4 388.3L817.5 387.2L817.6 386.2L817.7 385.1L817.8 384.0L817.9 382.9L818.0 381.8L818.1 380.8L818.1 379.7L818.2 378.7L818.2 377.6L818.3 376.5L818.3 375.5L818.3 374.4L818.4 373.4L818.4 372.3L818.4 371.3L818.4 370.3L818.4 369.2L818.3 368.2L818.3 367.2L818.3 366.2L818.2 365.1L818.2 364.1L818.1 363.1L818.0 362.1L818.0 361.1L817.9 360.1L817.8 359.1L817.7 358.1L817.6 357.1L817.5 356.2L817.4 355.2L817.3 354.2L817.1 353.2L817.0 352.3L816.8 351.3L816.7 350.3L816.5 349.4L816.4 348.4L816.2 347.5L816.0 346.5L815.8 345.6L815.6 344.6L815.4 343.7L815.2 342.8L815.0 341.8L814.8 340.9L814.6 340.0L814.3 339.1L814.1 338.2L813.8 337.3L813.6 336.4L813.3 335.5L813.0 334.6L812.8 333.7L812.5 332.8L812.2 331.9L811.9 331.0L811.6 330.1L811.3 329.3L811.0 328.4L810.7 327.5L810.3 326.7L810.0 325.8L809.7 325.0L809.3 324.1L809.0 323.3L808.6 322.5L808.3 321.6L807.9 320.8L807.5 320.0L807.1 319.1L806.7 318.3L806.3 317.5L805.9 316.7L805.5 315.9L805.1 315.1L804.7 314.3L804.3 313.5L803.8 312.7L803.4 312.0L803.0 311.2L802.5 310.4L802.1 309.6L801.6 308.9L801.1 308.1L800.7 307.4L800.2 306.6L799.7 305.9L799.2 305.1L798.7 304.4L798.2 303.7L797.7 302.9L797.2 302.2L796.7 301.5L796.1 300.8L795.6 300.1L795.1 299.4L794.5 298.7L794.0 298.0L793.4 297.3L792.9 296.6L792.3 295.9L791.7 295.2L791.1 294.6L790.6 293.9L790.0 293.2L789.4 292.6L788.8 291.9L788.2 291.3L787.6 290.6L786.9 290.0L786.3 289.4L785.7 288.7L785.1 288.1L784.4 287.5L783.8 286.9L783.1 286.3L782.5 285.7L781.8 285.1L781.1 284.5L780.5 283.9L779.8 283.3L779.1 282.7L778.4 282.2L777.7 281.6L777.0 281.0L776.3 280.5L775.6 279.9L774.9 279.4L774.2 278.9L773.5 278.3L772.7 277.8L772.0 277.3L771.3 276.7L770.5 276.2L769.8 275.7L769.0 275.2L768.2 274.7L767.5 274.2L766.7 273.7L765.9 273.3L765.1 272.8L764.4 272.3L763.6 271.9L762.8 271.4L762.0 270.9L761.2 270.5L760.3 270.1L759.5 269.6L758.7 269.2L757.9 268.8L757.0 268.3L756.2 267.9L755.4 267.5L754.5 267.1L753.7 266.7L752.8 266.3L751.9 266.0L751.1 265.6L750.2 265.2L749.3 264.8L748.4 264.5L747.5 264.1L746.6 263.8L745.7 263.4L744.8 263.1L743.9 262.8L743.0 262.4L742.1 262.1L741.2 261.8L740.2 261.5L739.3 261.2L738.4 260.9L737.4 260.6L736.5 260.4L735.5 260.1L734.6 259.8L733.6 259.6L732.6 259.3L731.7 259.1L730.7 258.8L729.7 258.6L728.7 258.4L727.7 258.1L726.7 257.9L725.7 257.7L724.7 257.5L723.7 257.3L722.7 257.1L721.7 257.0L720.6 256.8L719.6 256.6L718.6 256.5L717.5 256.3L716.5 256.2L715.4 256.0L714.4 255.9L713.3 255.8L712.3 255.7L711.2 255.6L710.1 255.5L709.1 255.4L708.0 255.3L706.9 255.2L705.8 255.1L704.7 255.1L703.6 255.0L702.5 255.0L701.4 254.9L700.3 254.9L699.2 254.9L698.0 254.9L696.9 254.9L695.8 254.9L694.6 254.9L693.5 254.9L692.4 254.9L691.2 254.9L690.0 255.0L688.9 255.0L687.7 255.1L686.6 255.2L685.4 255.2L684.2 255.3L683.0 255.4L681.8 255.5L680.7 255.6L679.5 255.7L678.3 255.8L677.1 256.0L675.9 256.1L674.6 256.3L673.4 256.4L672.2 256.6L671.0 256.8L669.8 257.0L668.5 257.2L667.3 257.4L666.0 257.6L664.8 257.8L663.6 258.1L662.3 258.3L661.0 258.6L659.8 258.8L658.5 259.1L657.2 259.4L656.0 259.7L654.7 260.0L653.4 260.3L652.1 260.6L650.8 261.0L649.5 261.3L648.4 261.6" fill="none" stroke="#2020ff" stroke-width="2.15" stroke-linejoin="round" clip-path="url(#c1)"/>
<circle cx="565.0" cy="487.4" r="5.6" fill="#0000ff" stroke="#000" stroke-width="1.1"/>
<path d="M363.40 590.00V581.10M363.40 236.00V244.90M565.80 590.00V581.10M565.80 236.00V244.90M768.20 590.00V581.10M768.20 236.00V244.90M970.60 590.00V581.10M970.60 236.00V244.90M165.00 590.10H173.90M1169.00 590.10H1160.10M165.00 539.50H173.90M1169.00 539.50H1160.10M165.00 488.90H173.90M1169.00 488.90H1160.10M165.00 438.30H173.90M1169.00 438.30H1160.10M165.00 387.70H173.90M1169.00 387.70H1160.10M165.00 337.10H173.90M1169.00 337.10H1160.10M165.00 286.50H173.90M1169.00 286.50H1160.10M165.00 235.90H173.90M1169.00 235.90H1160.10" stroke="#000" stroke-width="1.1" fill="none"/>
<rect x="165.0" y="236.0" width="1004.0" height="354.0" fill="none" stroke="#000" stroke-width="2.2"/>
<g font-family="Liberation Sans, sans-serif" font-size="29" fill="#000">
<text x="345.20" y="618.70" textLength="35.67" lengthAdjust="spacingAndGlyphs" font-size="29.00">−2</text>
<text x="559.00" y="619.20" textLength="15.18" lengthAdjust="spacingAndGlyphs" font-size="29.00">0</text>
<text x="759.40" y="618.70" textLength="15.93" lengthAdjust="spacingAndGlyphs" font-size="29.00">2</text>
<text x="961.20" y="619.60" textLength="18.43" lengthAdjust="spacingAndGlyphs" font-size="29.00">4</text>
<text x="94.40" y="597.40" textLength="61.86" lengthAdjust="spacingAndGlyphs" font-size="29.00">−1.0</text>
<text x="94.40" y="547.00" textLength="61.85" lengthAdjust="spacingAndGlyphs" font-size="29.00">−0.5</text>
<text x="115.20" y="495.80" textLength="40.48" lengthAdjust="spacingAndGlyphs" font-size="29.00">0.0</text>
<text x="115.20" y="445.40" textLength="40.43" lengthAdjust="spacingAndGlyphs" font-size="29.00">0.5</text>
<text x="115.60" y="395.15" textLength="39.55" lengthAdjust="spacingAndGlyphs" font-size="29.00">1.0</text>
<text x="115.60" y="344.55" textLength="39.55" lengthAdjust="spacingAndGlyphs" font-size="29.00">1.5</text>
<text x="112.80" y="293.40" textLength="42.57" lengthAdjust="spacingAndGlyphs" font-size="29.00">2.0</text>
<text x="112.80" y="242.35" textLength="42.99" lengthAdjust="spacingAndGlyphs" font-size="29.00">2.5</text>
<text transform="translate(74.55 550.60) rotate(-90)" textLength="278.27" lengthAdjust="spacingAndGlyphs" font-size="28.00">Lateral position in m</text>
<text x="1119.40" y="654.05" textLength="48.18" lengthAdjust="spacingAndGlyphs" font-size="29.00">1e7</text>
<text x="161.80" y="228.65" textLength="48.83" lengthAdjust="spacingAndGlyphs" font-size="29.00">1e7</text>
</g>
<rect x="165.0" y="659.2" width="1004.0" height="353.9" fill="#fff"/>
<clipPath id="c2"><rect x="165.0" y="659.2" width="1004.0" height="353.9"/></clipPath>
<path d="M165.0 1001.7L165.8 1001.7L166.6 1001.6L167.4 1001.6L168.2 1001.5L169.0 1001.5L169.8 1001.5L170.6 1001.4L171.4 1001.4L172.2 1001.4L173.0 1001.3L173.8 1001.3L174.6 1001.3L175.4 1001.2L176.2 1001.2L177.0 1001.2L177.9 1001.2L178.7 1001.1L179.5 1001.1L180.3 1001.1L181.1 1001.1L181.9 1001.0L182.7 1001.0L183.5 1001.0L184.3 1001.0L185.1 1000.9L185.9 1000.9L186.7 1000.9L187.5 1000.9L188.3 1000.8L189.1 1000.8L189.9 1000.8L190.7 1000.8L191.5 1000.7L192.3 1000.7L193.1 1000.7L193.9 1000.7L194.7 1000.7L195.5 1000.6L196.3 1000.6L197.1 1000.6L197.9 1000.6L198.7 1000.5L199.5 1000.5L200.3 1000.5L201.1 1000.5L201.9 1000.5L202.8 1000.4L203.6 1000.4L204.4 1000.4L205.2 1000.4L206.0 1000.3L206.8 1000.3L207.6 1000.3L208.4 1000.3L209.2 1000.2L210.0 1000.2L210.8 1000.2L211.6 1000.2L212.4 1000.2L213.2 1000.1L214.0 1000.1L214.8 1000.1L215.6 1000.1L216.4 1000.0L217.2 1000.0L218.0 1000.0L218.8 999.9L219.6 999.9L220.4 999.9L221.2 999.9L222.0 999.8L222.8 999.8L223.6 999.8L224.4 999.7L225.2 999.7L226.0 999.7L226.8 999.6L227.6 999.6L228.5 999.6L229.3 999.5L230.1 999.5L230.9 999.5L231.7 999.4L232.5 999.4L233.3 999.3L234.1 999.3L234.9 999.2L235.7 999.2L236.5 999.1L237.3 999.1L238.1 999.0L238.9 998.9L239.7 998.9L240.5 998.8L241.3 998.7L242.1 998.6L242.9 998.6L243.7 998.5L244.5 998.4L245.3 998.2L246.1 998.1L246.9 998.0L247.7 997.8L248.5 997.6L249.3 997.4L250.1 997.2L250.9 996.9L251.7 996.6L252.5 996.2L253.4 995.8L254.2 995.2L255.0 994.6L255.8 993.8L256.6 992.9L257.4 991.7L258.2 990.3L259.0 988.5L259.8 986.4L260.6 983.7L261.4 980.6L262.2 976.9L263.0 972.7L263.8 968.0L264.6 963.1L265.4 958.2L266.2 953.4L267.0 948.9L267.8 944.9L268.6 941.5L269.4 938.6L270.2 936.2L271.0 934.2L271.8 932.7L272.6 931.4L273.4 930.3L274.2 929.5L275.0 928.8L275.8 928.3L276.6 927.8L277.4 927.4L278.3 927.1L279.1 926.8L279.9 926.6L280.7 926.4L281.5 926.2L282.3 926.1L283.1 925.9L283.9 925.8L284.7 925.7L285.5 925.6L286.3 925.5L287.1 925.4L287.9 925.4L288.7 925.3L289.5 925.2L290.3 925.2L291.1 925.1L291.9 925.1L292.7 925.0L293.5 925.0L294.3 924.9L295.1 924.9L295.9 924.8L296.7 924.8L297.5 924.8L298.3 924.7L299.1 924.7L299.9 924.7L300.7 924.6L301.5 924.6L302.3 924.6L303.2 924.6L304.0 924.5L304.8 924.5L305.6 924.5L306.4 924.5L307.2 924.4L308.0 924.4L308.8 924.4L309.6 924.4L310.4 924.3L311.2 924.3L312.0 924.3L312.8 924.3L313.6 924.3L314.4 924.2L315.2 924.2L316.0 924.2L316.8 924.2L317.6 924.2L318.4 924.2L319.2 924.1L320.0 924.1L320.8 924.1L321.6 924.1L322.4 924.1L323.2 924.1L324.0 924.0L324.8 924.0L325.6 924.0L326.4 924.0L327.2 924.0L328.0 924.0L328.9 923.9L329.7 923.9L330.5 923.9L331.3 923.9L332.1 923.9L332.9 923.9L333.7 923.8L334.5 923.8L335.3 923.8L336.1 923.8L336.9 923.8L337.7 923.8L338.5 923.8L339.3 923.7L340.1 923.7L340.9 923.7L341.7 923.7L342.5 923.7L343.3 923.7L344.1 923.7L344.9 923.6L345.7 923.6L346.5 923.6L347.3 923.6L348.1 923.6L348.9 923.6L349.7 923.5L350.5 923.5L351.3 923.5L352.1 923.5L352.9 923.5L353.8 923.5L354.6 923.5L355.4 923.4L356.2 923.4L357.0 923.4L357.8 923.4L358.6 923.4L359.4 923.4L360.2 923.3L361.0 923.3L361.8 923.3L362.6 923.3L363.4 923.3L364.2 923.2L365.0 923.2L365.8 923.2L366.6 923.2L367.4 923.2L368.2 923.1L369.0 923.1L369.8 923.1L370.6 923.1L371.4 923.1L372.2 923.0L373.0 923.0L373.8 923.0L374.6 923.0L375.4 922.9L376.2 922.9L377.0 922.9L377.8 922.9L378.7 922.8L379.5 922.8L380.3 922.8L381.1 922.7L381.9 922.7L382.7 922.7L383.5 922.6L384.3 922.6L385.1 922.6L385.9 922.5L386.7 922.5L387.5 922.4L388.3 922.4L389.1 922.3L389.9 922.3L390.7 922.2L391.5 922.1L392.3 922.1L393.1 922.0L393.9 921.9L394.7 921.8L395.5 921.7L396.3 921.6L397.1 921.5L397.9 921.3L398.7 921.2L399.5 921.0L400.3 920.8L401.1 920.5L401.9 920.2L402.7 919.9L403.6 919.4L404.4 918.9L405.2 918.3L406.0 917.6L406.8 916.7L407.6 915.6L408.4 914.3L409.2 912.6L410.0 910.6L410.8 908.2L411.6 905.3L412.4 902.0L413.2 898.2L414.0 894.1L414.8 889.8L415.6 885.4L416.4 881.2L417.2 877.3L418.0 873.8L418.8 870.7L419.6 868.2L420.4 866.0L421.2 864.3L422.0 862.9L422.8 861.7L423.6 860.8L424.4 860.0L425.2 859.4L426.0 858.9L426.8 858.4L427.6 858.1L428.4 857.8L429.3 857.5L430.1 857.3L430.9 857.2L431.7 857.0L432.5 856.9L433.3 856.7L434.1 856.6L434.9 856.5L435.7 856.4L436.5 856.4L437.3 856.3L438.1 856.2L438.9 856.2L439.7 856.1L440.5 856.1L441.3 856.0L442.1 856.0L442.9 855.9L443.7 855.9L444.5 855.9L445.3 855.8L446.1 855.8L446.9 855.8L447.7 855.7L448.5 855.7L449.3 855.7L450.1 855.7L450.9 855.6L451.7 855.6L452.5 855.6L453.3 855.6L454.2 855.6L455.0 855.5L455.8 855.5L456.6 855.5L457.4 855.5L458.2 855.5L459.0 855.4L459.8 855.4L460.6 855.4L461.4 855.4L462.2 855.4L463.0 855.4L463.8 855.3L464.6 855.3L465.4 855.3L466.2 855.3L467.0 855.3L467.8 855.3L468.6 855.3L469.4 855.2L470.2 855.2L471.0 855.2L471.8 855.2L472.6 855.2L473.4 855.2L474.2 855.2L475.0 855.2L475.8 855.1L476.6 855.1L477.4 855.1L478.2 855.1L479.1 855.1L479.9 855.1L480.7 855.1L481.5 855.1L482.3 855.1L483.1 855.0L483.9 855.0L484.7 855.0L485.5 855.0L486.3 855.0L487.1 855.0L487.9 855.0L488.7 855.0L489.5 855.0L490.3 854.9L491.1 854.9L491.9 854.9L492.7 854.9L493.5 854.9L494.3 854.9L495.1 854.9L495.9 854.9L496.7 854.9L497.5 854.9L498.3 854.8L499.1 854.8L499.9 854.8L500.7 854.8L501.5 854.8L502.3 854.8L503.1 854.8L504.0 854.8L504.8 854.8L505.6 854.8L506.4 854.7L507.2 854.7L508.0 854.7L508.8 854.7L509.6 854.7L510.4 854.7L511.2 854.7L512.0 854.7L512.8 854.7L513.6 854.7L514.4 854.6L515.2 854.6L516.0 854.6L516.8 854.6L517.6 854.6L518.4 854.6L519.2 854.6L520.0 854.6L520.8 854.6L521.6 854.5L522.4 854.5L523.2 854.5L524.0 854.5L524.8 854.5L525.6 854.5L526.4 854.5L527.2 854.5L528.0 854.4L528.8 854.4L529.7 854.4L530.5 854.4L531.3 854.4L532.1 854.4L532.9 854.4L533.7 854.3L534.5 854.3L535.3 854.3L536.1 854.3L536.9 854.3L537.7 854.3L538.5 854.3L539.3 854.2L540.1 854.2L540.9 854.2L541.7 854.2L542.5 854.2L543.3 854.1L544.1 854.1L544.9 854.1L545.7 854.1L546.5 854.1L547.3 854.0L548.1 854.0L548.9 854.0L549.7 854.0L550.5 853.9L551.3 853.9L552.1 853.9L552.9 853.9L553.7 853.8L554.6 853.8L555.4 853.8L556.2 853.7L557.0 853.7L557.8 853.6L558.6 853.6L559.4 853.5L560.2 853.5L561.0 853.4L561.8 853.4L562.6 853.3L563.4 853.2L564.2 853.1L565.0 853.0L565.8 852.9L566.6 852.8L567.4 852.7L568.2 852.5L569.0 852.4L569.8 852.2L570.6 851.9L571.4 851.6L572.2 851.3L573.0 850.9L573.8 850.4L574.6 849.8L575.4 849.1L576.2 848.3L577.0 847.2L577.8 845.9L578.6 844.3L579.5 842.4L580.3 840.1L581.1 837.5L581.9 834.4L582.7 830.9L583.5 827.2L584.3 823.4L585.1 819.5L585.9 815.8L586.7 812.4L587.5 809.3L588.3 806.7L589.1 804.4L589.9 802.5L590.7 801.0L591.5 799.7L592.3 798.7L593.1 797.8L593.9 797.1L594.7 796.6L595.5 796.1L596.3 795.7L597.1 795.4L597.9 795.1L598.7 794.9L599.5 794.7L600.3 794.6L601.1 794.4L601.9 794.3L602.7 794.2L603.5 794.1L604.4 794.0L605.2 793.9L606.0 793.9L606.8 793.8L607.6 793.8L608.4 793.7L609.2 793.7L610.0 793.6L610.8 793.6L611.6 793.5L612.4 793.5L613.2 793.5L614.0 793.4L614.8 793.4L615.6 793.4L616.4 793.4L617.2 793.3L618.0 793.3L618.8 793.3L619.6 793.3L620.4 793.3L621.2 793.2L622.0 793.2L622.8 793.2L623.6 793.2L624.4 793.2L625.2 793.2L626.0 793.1L626.8 793.1L627.6 793.1L628.4 793.1L629.2 793.1L630.1 793.1L630.9 793.1L631.7 793.0L632.5 793.0L633.3 793.0L634.1 793.0L634.9 793.0L635.7 793.0L636.5 793.0L637.3 793.0L638.1 793.0L638.9 792.9L639.7 792.9L640.5 792.9L641.3 792.9L642.1 792.9L642.9 792.9L643.7 792.9L644.5 792.9L645.3 792.9L646.1 792.9L646.9 792.8L647.7 792.8L648.5 792.8L649.3 792.8L650.1 792.8L650.9 792.8L651.7 792.8L652.5 792.8L653.3 792.8L654.1 792.8L655.0 792.8L655.8 792.8L656.6 792.8L657.4 792.7L658.2 792.7L659.0 792.7L659.8 792.7L660.6 792.7L661.4 792.7L662.2 792.7L663.0 792.7L663.8 792.7L664.6 792.7L665.4 792.7L666.2 792.7L667.0 792.7L667.8 792.6L668.6 792.6L669.4 792.6L670.2 792.6L671.0 792.6L671.8 792.6L672.6 792.6L673.4 792.6L674.2 792.6L675.0 792.6L675.8 792.6L676.6 792.6L677.4 792.6L678.2 792.6L679.0 792.5L679.9 792.5L680.7 792.5L681.5 792.5L682.3 792.5L683.1 792.5L683.9 792.5L684.7 792.5L685.5 792.5L686.3 792.5L687.1 792.5L687.9 792.5L688.7 792.5L689.5 792.5L690.3 792.4L691.1 792.4L691.9 792.4L692.7 792.4L693.5 792.4L694.3 792.4L695.1 792.4L695.9 792.4L696.7 792.4L697.5 792.4L698.3 792.4L699.1 792.4L699.9 792.4L700.7 792.4L701.5 792.3L702.3 792.3L703.1 792.3L703.9 792.3L704.8 792.3L705.6 792.3L706.4 792.3L707.2 792.3L708.0 792.3L708.8 792.3L709.6 792.3L710.4 792.3L711.2 792.2L712.0 792.2L712.8 792.2L713.6 792.2L714.4 792.2L715.2 792.2L716.0 792.2L716.8 792.2L717.6 792.2L718.4 792.2L719.2 792.2L720.0 792.1L720.8 792.1L721.6 792.1L722.4 792.1L723.2 792.1L724.0 792.1L724.8 792.1L725.6 792.1L726.4 792.1L727.2 792.0L728.0 792.0L728.8 792.0L729.6 792.0L730.5 792.0L731.3 792.0L732.1 792.0L732.9 791.9L733.7 791.9L734.5 791.9L735.3 791.9L736.1 791.9L736.9 791.9L737.7 791.9L738.5 791.8L739.3 791.8L740.1 791.8L740.9 791.8L741.7 791.7L742.5 791.7L743.3 791.7L744.1 791.7L744.9 791.6L745.7 791.6L746.5 791.6L747.3 791.6L748.1 791.5L748.9 791.5L749.7 791.4L750.5 791.4L751.3 791.3L752.1 791.3L752.9 791.2L753.7 791.2L754.5 791.1L755.4 791.0L756.2 790.9L757.0 790.8L757.8 790.7L758.6 790.6L759.4 790.4L760.2 790.2L761.0 790.0L761.8 789.7L762.6 789.4L763.4 789.1L764.2 788.6L765.0 788.1L765.8 787.5L766.6 786.7L767.4 785.7L768.2 784.5L769.0 783.1L769.8 781.4L770.6 779.4L771.4 777.0L772.2 774.3L773.0 771.2L773.8 767.9L774.6 764.5L775.4 761.0L776.2 757.7L777.0 754.6L777.8 751.7L778.6 749.3L779.4 747.1L780.3 745.3L781.1 743.8L781.9 742.6L782.7 741.6L783.5 740.8L784.3 740.1L785.1 739.6L785.9 739.1L786.7 738.8L787.5 738.5L788.3 738.2L789.1 738.0L789.9 737.8L790.7 737.6L791.5 737.5L792.3 737.4L793.1 737.3L793.9 737.2L794.7 737.1L795.5 737.1L796.3 737.0L797.1 737.0L797.9 736.9L798.7 736.9L799.5 736.8L800.3 736.8L801.1 736.7L801.9 736.7L802.7 736.7L803.5 736.7L804.3 736.6L805.2 736.6L806.0 736.6L806.8 736.6L807.6 736.5L808.4 736.5L809.2 736.5L810.0 736.5L810.8 736.5L811.6 736.5L812.4 736.4L813.2 736.4L814.0 736.4L814.8 736.4L815.6 736.4L816.4 736.4L817.2 736.4L818.0 736.4L818.8 736.3L819.6 736.3L820.4 736.3L821.2 736.3L822.0 736.3L822.8 736.3L823.6 736.3L824.4 736.3L825.2 736.3L826.0 736.3L826.8 736.3L827.6 736.2L828.4 736.2L829.2 736.2L830.0 736.2L830.9 736.2L831.7 736.2L832.5 736.2L833.3 736.2L834.1 736.2L834.9 736.2L835.7 736.2L836.5 736.2L837.3 736.2L838.1 736.1L838.9 736.1L839.7 736.1L840.5 736.1L841.3 736.1L842.1 736.1L842.9 736.1L843.7 736.1L844.5 736.1L845.3 736.1L846.1 736.1L846.9 736.1L847.7 736.1L848.5 736.1L849.3 736.1L850.1 736.1L850.9 736.0L851.7 736.0L852.5 736.0L853.3 736.0L854.1 736.0L854.9 736.0L855.8 736.0L856.6 736.0L857.4 736.0L858.2 736.0L859.0 736.0L859.8 736.0L860.6 736.0L861.4 736.0L862.2 736.0L863.0 736.0L863.8 736.0L864.6 736.0L865.4 736.0L866.2 735.9L867.0 735.9L867.8 735.9L868.6 735.9L869.4 735.9L870.2 735.9L871.0 735.9L871.8 735.9L872.6 735.9L873.4 735.9L874.2 735.9L875.0 735.9L875.8 735.9L876.6 735.9L877.4 735.9L878.2 735.9L879.0 735.9L879.8 735.9L880.7 735.9L881.5 735.9L882.3 735.8L883.1 735.8L883.9 735.8L884.7 735.8L885.5 735.8L886.3 735.8L887.1 735.8L887.9 735.8L888.7 735.8L889.5 735.8L890.3 735.8L891.1 735.8L891.9 735.8L892.7 735.8L893.5 735.8L894.3 735.8L895.1 735.8L895.9 735.8L896.7 735.8L897.5 735.8L898.3 735.8L899.1 735.7L899.9 735.7L900.7 735.7L901.5 735.7L902.3 735.7L903.1 735.7L903.9 735.7L904.7 735.7L905.6 735.7L906.4 735.7L907.2 735.7L908.0 735.7L908.8 735.7L909.6 735.7L910.4 735.7L911.2 735.7L912.0 735.7L912.8 735.7L913.6 735.6L914.4 735.6L915.2 735.6L916.0 735.6L916.8 735.6L917.6 735.6L918.4 735.6L919.2 735.6L920.0 735.6L920.8 735.6L921.6 735.6L922.4 735.6L923.2 735.6L924.0 735.6L924.8 735.6L925.6 735.6L926.4 735.5L927.2 735.5L928.0 735.5L928.8 735.5L929.6 735.5L930.4 735.5L931.3 735.5L932.1 735.5L932.9 735.5L933.7 735.5L934.5 735.5L935.3 735.5L936.1 735.5L936.9 735.5L937.7 735.4L938.5 735.4L939.3 735.4L940.1 735.4L940.9 735.4L941.7 735.4L942.5 735.4L943.3 735.4L944.1 735.4L944.9 735.4L945.7 735.3L946.5 735.3L947.3 735.3L948.1 735.3L948.9 735.3L949.7 735.3L950.5 735.3L951.3 735.2L952.1 735.2L952.9 735.2L953.7 735.2L954.5 735.2L955.3 735.2L956.2 735.1L957.0 735.1L957.8 735.1L958.6 735.1L959.4 735.1L960.2 735.0L961.0 735.0L961.8 735.0L962.6 734.9L963.4 734.9L964.2 734.9L965.0 734.8L965.8 734.8L966.6 734.7L967.4 734.7L968.2 734.6L969.0 734.5L969.8 734.5L970.6 734.4L971.4 734.3L972.2 734.1L973.0 734.0L973.8 733.8L974.6 733.6L975.4 733.4L976.2 733.1L977.0 732.8L977.8 732.4L978.6 732.0L979.4 731.4L980.2 730.7L981.1 729.8L981.9 728.8L982.7 727.6L983.5 726.1L984.3 724.3L985.1 722.2L985.9 719.8L986.7 717.1L987.5 714.2L988.3 711.1L989.1 708.0L989.9 704.9L990.7 702.0L991.5 699.4L992.3 697.0L993.1 695.0L993.9 693.2L994.7 691.7L995.5 690.5L996.3 689.5L997.1 688.7L997.9 688.1L998.7 687.5L999.5 687.1L1000.3 686.7L1001.1 686.4L1001.9 686.1L1002.7 685.9L1003.5 685.7L1004.3 685.6L1005.1 685.4L1006.0 685.3L1006.8 685.2L1007.6 685.2L1008.4 685.1L1009.2 685.0L1010.0 685.0L1010.8 684.9L1011.6 684.9L1012.4 684.8L1013.2 684.8L1014.0 684.8L1014.8 684.7L1015.6 684.7L1016.4 684.7L1017.2 684.6L1018.0 684.6L1018.8 684.6L1019.6 684.6L1020.4 684.6L1021.2 684.5L1022.0 684.5L1022.8 684.5L1023.6 684.5L1024.4 684.5L1025.2 684.5L1026.0 684.5L1026.8 684.5L1027.6 684.4L1028.4 684.4L1029.2 684.4L1030.0 684.4L1030.8 684.4L1031.7 684.4L1032.5 684.4L1033.3 684.4L1034.1 684.4L1034.9 684.4L1035.7 684.3L1036.5 684.3L1037.3 684.3L1038.1 684.3L1038.9 684.3L1039.7 684.3L1040.5 684.3L1041.3 684.3L1042.1 684.3L1042.9 684.3L1043.7 684.3L1044.5 684.3L1045.3 684.3L1046.1 684.3L1046.9 684.3L1047.7 684.2L1048.5 684.2L1049.3 684.2L1050.1 684.2L1050.9 684.2L1051.7 684.2L1052.5 684.2L1053.3 684.2L1054.1 684.2L1054.9 684.2L1055.7 684.2L1056.6 684.2L1057.4 684.2L1058.2 684.2L1059.0 684.2L1059.8 684.2L1060.6 684.2L1061.4 684.2L1062.2 684.2L1063.0 684.2L1063.8 684.1L1064.6 684.1L1065.4 684.1L1066.2 684.1L1067.0 684.1L1067.8 684.1L1068.6 684.1L1069.4 684.1L1070.2 684.1L1071.0 684.1L1071.8 684.1L1072.6 684.1L1073.4 684.1L1074.2 684.1L1075.0 684.1L1075.8 684.1L1076.6 684.1L1077.4 684.1L1078.2 684.1L1079.0 684.1L1079.8 684.1L1080.6 684.1L1081.5 684.1L1082.3 684.1L1083.1 684.1L1083.9 684.0L1084.7 684.0L1085.5 684.0L1086.3 684.0L1087.1 684.0L1087.9 684.0L1088.7 684.0L1089.5 684.0L1090.3 684.0L1091.1 684.0L1091.9 684.0L1092.7 684.0L1093.5 684.0L1094.3 684.0L1095.1 684.0L1095.9 684.0L1096.7 684.0L1097.5 684.0L1098.3 684.0L1099.1 684.0L1099.9 684.0L1100.7 684.0L1101.5 684.0L1102.3 684.0L1103.1 684.0L1103.9 684.0L1104.7 684.0L1105.5 684.0L1106.4 684.0L1107.2 683.9L1108.0 683.9L1108.8 683.9L1109.6 683.9L1110.4 683.9L1111.2 683.9L1112.0 683.9L1112.8 683.9L1113.6 683.9L1114.4 683.9L1115.2 683.9L1116.0 683.9L1116.8 683.9L1117.6 683.9L1118.4 683.9L1119.2 683.9L1120.0 683.9L1120.8 683.9L1121.6 683.9L1122.4 683.9L1123.2 683.9L1124.0 683.9L1124.8 683.9L1125.6 683.9L1126.4 683.9L1127.2 683.9L1128.0 683.9L1128.8 683.9L1129.6 683.9L1130.4 683.8L1131.2 683.8L1132.1 683.8L1132.9 683.8L1133.7 683.8L1134.5 683.8L1135.3 683.8L1136.1 683.8L1136.9 683.8L1137.7 683.8L1138.5 683.8L1139.3 683.8L1140.1 683.8L1140.9 683.8L1141.7 683.8L1142.5 683.8L1143.3 683.8L1144.1 683.8L1144.9 683.8L1145.7 683.8L1146.5 683.8L1147.3 683.8L1148.1 683.8L1148.9 683.8L1149.7 683.8L1150.5 683.8L1151.3 683.7L1152.1 683.7L1152.9 683.7L1153.7 683.7L1154.5 683.7L1155.3 683.7L1156.1 683.7L1157.0 683.7L1157.8 683.7L1158.6 683.7L1159.4 683.7L1160.2 683.7L1161.0 683.7L1161.8 683.7L1162.6 683.7L1163.4 683.7L1164.2 683.7L1165.0 683.7L1165.8 683.7L1166.6 683.7L1167.4 683.7L1168.2 683.6L1168.9 683.6" fill="none" stroke="#2020ff" stroke-width="2.15" stroke-linejoin="round" clip-path="url(#c2)"/>
<path d="M165.00 1013.10V1004.20M165.00 659.20V668.10M416.00 1013.10V1004.20M416.00 659.20V668.10M667.00 1013.10V1004.20M667.00 659.20V668.10M918.00 1013.10V1004.20M918.00 659.20V668.10M1169.00 1013.10V1004.20M1169.00 659.20V668.10M165.00 1013.10H173.90M1169.00 1013.10H1160.10M165.00 973.78H173.90M1169.00 973.78H1160.10M165.00 934.46H173.90M1169.00 934.46H1160.10M165.00 895.13H173.90M1169.00 895.13H1160.10M165.00 855.81H173.90M1169.00 855.81H1160.10M165.00 816.49H173.90M1169.00 816.49H1160.10M165.00 777.17H173.90M1169.00 777.17H1160.10M165.00 737.84H173.90M1169.00 737.84H1160.10M165.00 698.52H173.90M1169.00 698.52H1160.10M165.00 659.20H173.90M1169.00 659.20H1160.10" stroke="#000" stroke-width="1.1" fill="none"/>
<rect x="165.0" y="659.2" width="1004.0" height="353.9" fill="none" stroke="#000" stroke-width="2.2"/>
<g font-family="Liberation Sans, sans-serif" font-size="29" fill="#000">
<text x="158.20" y="1042.50" textLength="16.28" lengthAdjust="spacingAndGlyphs" font-size="29.00">0</text>
<text x="381.00" y="1042.50" textLength="65.99" lengthAdjust="spacingAndGlyphs" font-size="29.00">5000</text>
<text x="623.20" y="1042.50" textLength="83.49" lengthAdjust="spacingAndGlyphs" font-size="29.00">10000</text>
<text x="874.60" y="1042.50" textLength="83.08" lengthAdjust="spacingAndGlyphs" font-size="29.00">15000</text>
<text x="1125.20" y="1042.50" textLength="86.15" lengthAdjust="spacingAndGlyphs" font-size="29.00">20000</text>
<text x="94.40" y="1020.55" textLength="60.98" lengthAdjust="spacingAndGlyphs" font-size="29.00">−5.0</text>
<text x="94.40" y="980.57" textLength="60.98" lengthAdjust="spacingAndGlyphs" font-size="29.00">−4.8</text>
<text x="94.40" y="941.63" textLength="60.98" lengthAdjust="spacingAndGlyphs" font-size="29.00">−4.6</text>
<text x="94.40" y="901.70" textLength="59.98" lengthAdjust="spacingAndGlyphs" font-size="29.00">−4.4</text>
<text x="94.40" y="862.77" textLength="61.00" lengthAdjust="spacingAndGlyphs" font-size="29.00">−4.2</text>
<text x="94.40" y="823.83" textLength="60.98" lengthAdjust="spacingAndGlyphs" font-size="29.00">−4.0</text>
<text x="94.40" y="783.90" textLength="60.98" lengthAdjust="spacingAndGlyphs" font-size="29.00">−3.8</text>
<text x="94.40" y="744.97" textLength="60.98" lengthAdjust="spacingAndGlyphs" font-size="29.00">−3.6</text>
<text x="94.40" y="705.03" textLength="59.98" lengthAdjust="spacingAndGlyphs" font-size="29.00">−3.4</text>
<text x="94.40" y="666.25" textLength="61.00" lengthAdjust="spacingAndGlyphs" font-size="29.00">−3.2</text>
<text x="576.80" y="1082.70" textLength="176.24" lengthAdjust="spacingAndGlyphs" font-size="28.00">Step number</text>
<text transform="translate(75.20 909.00) rotate(-90)" textLength="144.65" lengthAdjust="spacingAndGlyphs" font-size="28.00">Energy in J</text>
<text x="161.20" y="652.25" textLength="65.48" lengthAdjust="spacingAndGlyphs" font-size="29.00">1e11</text>
</g>
</svg>
 <div class="status"></div>
 <svg class="icons" width="700" height="140" viewBox="0 0 700 140">
<defs>
 <linearGradient id="gWall" x1="0" y1="0" x2="0" y2="1"><stop offset="0" stop-color="#ffffff"/><stop offset="1" stop-color="#e2e6e6"/></linearGradient>
 <linearGradient id="gDoor" x1="0" y1="0" x2="1" y2="1"><stop offset="0" stop-color="#fde4a8"/><stop offset="1" stop-color="#f0ac1c"/></linearGradient>
 <linearGradient id="gRoof" x1="0" y1="0" x2="1" y2="1"><stop offset="0" stop-color="#cc4460"/><stop offset="1" stop-color="#a81c38"/></linearGradient>
 <radialGradient id="gBall" cx="0.32" cy="0.3" r="0.75"><stop offset="0" stop-color="#72f4fa"/><stop offset="0.3" stop-color="#29a9bf"/><stop offset="0.75" stop-color="#11809b"/><stop offset="1" stop-color="#0a6682"/></radialGradient>
 <linearGradient id="gBlue" x1="0" y1="0" x2="1" y2="1"><stop offset="0" stop-color="#4f8fd6"/><stop offset="0.55" stop-color="#9ccdee"/><stop offset="1" stop-color="#d2f0fc"/></linearGradient>
 <linearGradient id="gGreen" x1="0" y1="0" x2="1" y2="1"><stop offset="0" stop-color="#7ae87a"/><stop offset="1" stop-color="#1fae22"/></linearGradient>
 <linearGradient id="gFlop" x1="0" y1="0" x2="1" y2="1"><stop offset="0" stop-color="#2f6f92"/><stop offset="0.4" stop-color="#1a5a7d"/><stop offset="1" stop-color="#175476"/></linearGradient>
 <linearGradient id="gLabel" x1="0" y1="0" x2="1" y2="1"><stop offset="0" stop-color="#cfe4ef"/><stop offset="1" stop-color="#8aa3b3"/></linearGradient>
 <linearGradient id="gShut" x1="0" y1="0" x2="1" y2="1"><stop offset="0" stop-color="#b9cad4"/><stop offset="1" stop-color="#8197a5"/></linearGradient>
 <linearGradient id="gHandle" x1="0" y1="0" x2="0" y2="1"><stop offset="0" stop-color="#f8d27a"/><stop offset="1" stop-color="#eea23c"/></linearGradient>
 <radialGradient id="gLens" cx="0.5" cy="0.5" r="0.5"><stop offset="0" stop-color="#d4eef2" stop-opacity="0.9"/><stop offset="0.8" stop-color="#b4dbe1" stop-opacity="0.9"/><stop offset="1" stop-color="#a8d2dc" stop-opacity="0.7"/></radialGradient>
</defs>
<!-- grip -->
<g fill="#d2cec9"><rect x="10" y="91" width="8" height="2"/><rect x="10" y="97" width="8" height="2"/><rect x="10" y="103" width="8" height="2"/></g>
<!-- home -->
<linearGradient id="gChim" x1="0" y1="0" x2="1" y2="1"><stop offset="0" stop-color="#fde6b0"/><stop offset="1" stop-color="#f0a824"/></linearGradient><rect x="47.4" y="77.6" width="6.6" height="12" fill="url(#gChim)" stroke="#a05a40" stroke-width="1.3"/>
<path d="M47.6 120.4V93L61.5 79L74.3 92V120.4Z" fill="url(#gWall)" stroke="#8da2a6" stroke-width="1.9"/>
<path d="M54 119V99.5Q54 96 57.5 96H64.5Q68 96 68 99.5V119Z" fill="url(#gDoor)" stroke="#a35a3a" stroke-width="1.6"/>
<path d="M61.5 74.8L83 96.2L77.8 100.8L64.6 86.3H58.2L41.3 102.9L38.3 98.2Z" fill="url(#gRoof)" stroke="#8e1a32" stroke-width="1.2" stroke-linejoin="round"/>
<!-- back -->
<circle cx="133.4" cy="97.5" r="20.4" fill="url(#gBall)" stroke="#0d627a" stroke-width="1"/>
<path d="M121.5 98L134.5 86V94.5H145.2V102H134.5V110Z" fill="#c7e6ec"/>
<!-- forward -->
<circle cx="206.5" cy="97.5" r="20.4" fill="url(#gBall)" stroke="#0d627a" stroke-width="1"/>
<path d="M220.5 98L206.7 86V94.5H197.5V102H206.7V110Z" fill="#c7e6ec"/>
<!-- separator -->
<rect x="253" y="73" width="2" height="48" fill="#dcd9d5"/>
<!-- pan -->
<path transform="translate(300.5 97.3)" d="M0 -23L7.2 -13.3H3V-3H13.8V-6.5L23.5 0L13.8 6.5V3H3V13.3H7.2L0 22.5L-7.2 13.3H-3V3H-13.8V6.5L-23.3 0L-13.8 -6.5V-3H-3V-13.3H-7.2Z" fill="#135e7f"/>
<!-- zoom -->
<rect x="359.6" y="92.7" width="34.1" height="23.3" fill="#fdfcff" stroke="#9dd2dc" stroke-width="2"/>
<path d="M378.5 90.5L395.5 79" stroke="#e08c3c" stroke-width="7.5" stroke-linecap="round"/>
<path d="M378.5 90.5L395.5 79" stroke="url(#gHandle)" stroke-width="5" stroke-linecap="round"/>
<circle cx="366.2" cy="98.4" r="14.6" fill="url(#gLens)" stroke="#b5dce3" stroke-width="1"/>
<rect x="360.5" y="93" width="17" height="17" fill="#dff3f7" opacity="0.55"/>
<g fill="#5393a8"><rect x="364.7" y="97" width="12.3" height="2"/><rect x="364.7" y="101.5" width="12.3" height="2"/><rect x="364.7" y="104.7" width="12.3" height="4.2"/></g>
<!-- separator 2 -->
<rect x="421" y="73" width="2" height="48" fill="#dcd9d5"/>
<!-- subplots -->
<rect x="452.6" y="79.6" width="36.5" height="36.5" rx="2.5" fill="#f4f4f4" stroke="#111" stroke-width="2.2"/>
<path d="M455 83H487" stroke="#b8b8b8" stroke-width="2"/>
<path d="M456 84V113" stroke="#b8b8b8" stroke-width="2"/>
<rect x="458" y="86.3" width="28.5" height="24.2" fill="url(#gBlue)"/>
<rect x="462.8" y="90.7" width="18.4" height="15.5" rx="3" fill="#fff" stroke="#111" stroke-width="2"/>
<rect x="464" y="92" width="16" height="5.5" fill="#9a9a9a"/>
<rect x="467" y="92" width="2.5" height="5" fill="#c8c8c8"/><rect x="470" y="92" width="3" height="5" fill="#7f8fd8"/><rect x="474" y="92" width="2.5" height="5" fill="#c8c8c8"/>
<g fill="url(#gGreen)" stroke="#145e14" stroke-width="1" stroke-linejoin="round">
<path d="M470.1 77.6L475.7 85H464.5Z"/>
<path d="M470.1 117.9L475.7 110.5H464.5Z"/>
<path d="M450.2 97.5L458 91.9V103.2Z"/>
<path d="M493.5 97.5L485.3 91.9V103.2Z"/>
</g>
<!-- save -->
<path d="M522 74.8H563Q566.8 74.8 566.8 78.6V117.6Q566.8 121.4 563 121.4H522Q518.3 121.4 518.3 117.6V78.6Q518.3 74.8 522 74.8Z" fill="url(#gFlop)"/>
<rect x="526.6" y="76.9" width="31.9" height="18.1" fill="url(#gLabel)"/>
<rect x="526.6" y="76.9" width="31.9" height="4" fill="#b06a3c"/>
<rect x="534.9" y="84.7" width="20" height="2.1" fill="#2c4c68"/>
<rect x="534.9" y="89.2" width="20" height="2.1" fill="#2c4c68"/>
<circle cx="523" cy="81.7" r="1.5" fill="#e8eef2"/><circle cx="561.8" cy="81.7" r="1.5" fill="#e8eef2"/>
<rect x="531.8" y="105.4" width="22.2" height="14.3" fill="url(#gShut)" stroke="#1e3a55" stroke-width="1"/>
<rect x="535.4" y="107.6" width="5" height="9.5" fill="#1a2540"/>
<!-- edit check -->
<rect x="600.7" y="86.4" width="25.3" height="24.4" fill="#fff" stroke="#8a8a8a" stroke-width="2.4"/>
<path d="M594.7 96.2L600.2 92.4L607.6 100.8Q616 85 631.8 77.9Q635.5 77 636.2 80.6L635.8 84.4Q622 91 613 107.5L608.3 117Z" fill="#12c42a"/>
</svg>

 <svg class="grip" style="position:absolute;left:0;top:0" width="1300" height="1156" viewBox="0 0 1300 1156"><rect x="1292.8" y="1129.2" width="2.2" height="2.2" fill="#fbfbfa"/><rect x="1291.8" y="1127.2" width="2.2" height="2.2" fill="#bab6b1"/><rect x="1286.5" y="1135.5" width="2.2" height="2.2" fill="#fbfbfa"/><rect x="1285.5" y="1133.5" width="2.2" height="2.2" fill="#bab6b1"/><rect x="1292.8" y="1135.5" width="2.2" height="2.2" fill="#fbfbfa"/><rect x="1291.8" y="1133.5" width="2.2" height="2.2" fill="#bab6b1"/><rect x="1280.5" y="1141.6" width="2.2" height="2.2" fill="#fbfbfa"/><rect x="1279.5" y="1139.6" width="2.2" height="2.2" fill="#bab6b1"/><rect x="1286.5" y="1141.6" width="2.2" height="2.2" fill="#fbfbfa"/><rect x="1285.5" y="1139.6" width="2.2" height="2.2" fill="#bab6b1"/><rect x="1292.8" y="1141.6" width="2.2" height="2.2" fill="#fbfbfa"/><rect x="1291.8" y="1139.6" width="2.2" height="2.2" fill="#bab6b1"/><rect x="1274.4" y="1147.6" width="2.2" height="2.2" fill="#fbfbfa"/><rect x="1273.4" y="1145.6" width="2.2" height="2.2" fill="#bab6b1"/><rect x="1280.5" y="1147.6" width="2.2" height="2.2" fill="#fbfbfa"/><rect x="1279.5" y="1145.6" width="2.2" height="2.2" fill="#bab6b1"/><rect x="1286.5" y="1147.6" width="2.2" height="2.2" fill="#fbfbfa"/><rect x="1285.5" y="1145.6" width="2.2" height="2.2" fill="#bab6b1"/><rect x="1292.8" y="1147.6" width="2.2" height="2.2" fill="#fbfbfa"/><rect x="1291.8" y="1145.6" width="2.2" height="2.2" fill="#bab6b1"/></svg>
</div>
</body></html>
